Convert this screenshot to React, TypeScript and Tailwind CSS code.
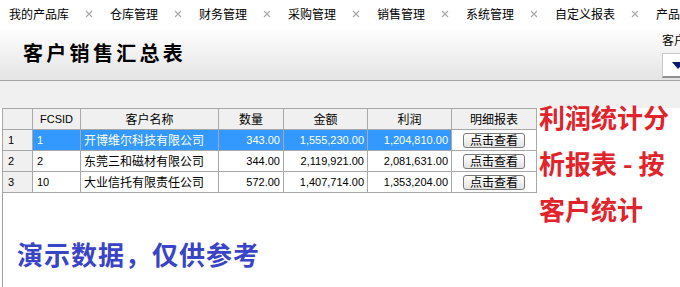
import React from "react";

const tabs = ["我的产品库", "仓库管理", "财务管理", "采购管理", "销售管理", "系统管理", "自定义报表", "产品"];

const rows = [
  { n: "1", id: "1", name: "开博维尔科技有限公司", qty: "343.00", amt: "1,555,230.00", profit: "1,204,810.00", sel: true },
  { n: "2", id: "2", name: "东莞三和磁材有限公司", qty: "344.00", amt: "2,119,921.00", profit: "2,081,631.00", sel: false },
  { n: "3", id: "10", name: "大业信托有限责任公司", qty: "572.00", amt: "1,407,714.00", profit: "1,353,204.00", sel: false },
];

const cjk = { fontFamily: "'Noto Sans CJK SC', 'Noto Sans', sans-serif" };
const num = { fontFamily: "'Liberation Sans', 'Noto Sans CJK SC', sans-serif" };

export default function App() {
  return (
    <div className="relative w-[680px] h-[287px] overflow-hidden bg-white flex flex-col text-black" style={cjk}>
      {/* tab bar */}
      <div className="h-[27px] shrink-0 flex items-center pl-[9px] whitespace-nowrap text-[12px] leading-none overflow-hidden">
        {tabs.map((t, i) => (
          <div key={i} className="flex items-center shrink-0">
            <span>{t}</span>
            {i < tabs.length - 1 && (
              <span className="ml-[15px] mr-[17px] w-[9px] flex justify-center">
                <svg width="8" height="8" viewBox="0 0 8 8">
                  <path d="M1 1 L7 7 M7 1 L1 7" stroke="#a9a9a9" strokeWidth="1.2" />
                </svg>
              </span>
            )}
          </div>
        ))}
      </div>

      {/* header */}
      <div className="h-[54px] shrink-0 flex bg-gradient-to-b from-white to-[#e4e4e4] border-b border-[#a3a3a3]">
        <div className="pl-[23px] pt-[14px] text-[20px] font-bold tracking-[3.3px] leading-[24px]">客户销售汇总表</div>
        <div className="ml-auto w-[18px] shrink-0 pt-[6px] whitespace-nowrap">
          <div className="text-[12px] leading-[14px] w-[40px]">客户名称</div>
          <div className="mt-[6px] w-[40px] h-[25px] border border-[#c8c8c8] border-b-[#909090] border-b-2 bg-white flex items-center pl-[9px]">
            <svg width="12" height="7" viewBox="0 0 12 7">
              <path d="M0 0 L12 0 L6 7 Z" fill="#0a1a6e" />
            </svg>
          </div>
        </div>
      </div>

      {/* band */}
      <div className="h-[27px] shrink-0 bg-[#f0f0f0]" />

      {/* content */}
      <div className="relative flex-1 ml-[2px] border-l border-[#a0a0a0]">
        <table className="table-fixed border-collapse -ml-px text-[12px]" style={{ width: 534 }}>
          <colgroup>
            <col style={{ width: 30 }} />
            <col style={{ width: 48 }} />
            <col style={{ width: 138 }} />
            <col style={{ width: 65 }} />
            <col style={{ width: 84 }} />
            <col style={{ width: 84 }} />
            <col style={{ width: 85 }} />
          </colgroup>
          <thead>
            <tr className="h-[21px] bg-[#f0f0f0]">
              <th className="border border-[#a8a8a8] font-normal"></th>
              <th className="border border-[#a8a8a8] font-normal text-[11px]" style={num}>FCSID</th>
              <th className="border border-[#a8a8a8] font-normal">客户名称</th>
              <th className="border border-[#a8a8a8] font-normal">数量</th>
              <th className="border border-[#a8a8a8] font-normal">金额</th>
              <th className="border border-[#a8a8a8] font-normal">利润</th>
              <th className="border border-[#a8a8a8] font-normal">明细报表</th>
            </tr>
          </thead>
          <tbody>
            {rows.map((r) => {
              const c = r.sel ? "bg-[#3399ff] text-white" : "bg-white";
              return (
                <tr key={r.n} className="h-[21px]">
                  <td className="border border-[#a8a8a8] bg-[#f0f0f0] pl-[5px] text-[11px]" style={num}>{r.n}</td>
                  <td className={`border border-[#a8a8a8] pl-[4px] text-[11px] ${c}`} style={num}>{r.id}</td>
                  <td className={`border border-[#a8a8a8] pl-[3px] ${c}`}>{r.name}</td>
                  <td className={`border border-[#a8a8a8] pr-[3px] text-right text-[11px] ${c}`} style={num}>{r.qty}</td>
                  <td className={`border border-[#a8a8a8] pr-[3px] text-right text-[11px] ${c}`} style={num}>{r.amt}</td>
                  <td className={`border border-[#a8a8a8] pr-[3px] text-right text-[11px] ${c}`} style={num}>{r.profit}</td>
                  <td className="border border-[#a8a8a8] bg-white p-0">
                    <div className="mx-auto w-[62px] h-[15px] rounded-[3px] border border-[#7a7a7a] bg-gradient-to-b from-white to-[#e2e2e2] flex items-center justify-center text-[12px] leading-none text-black">
                      点击查看
                    </div>
                  </td>
                </tr>
              );
            })}
          </tbody>
        </table>

        <div className="mt-[47px] ml-[14px] text-[26px] leading-[28px] font-bold text-[#3a44c6] tracking-[1px]">
          演示数据，仅供参考
        </div>

        {/* annotation */}
        <div className="absolute left-[536px] top-[-14px] w-[144px] text-[26px] leading-[46px] font-bold text-[#e1232b] whitespace-nowrap">
          利润统计分
          <br />
          析报表 - 按
          <br />
          客户统计
        </div>
      </div>
    </div>
  );
}
